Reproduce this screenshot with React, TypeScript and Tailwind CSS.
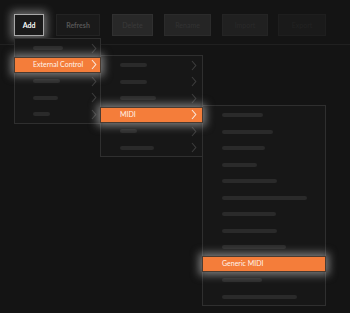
type Row = { label?: string; bar?: number; active?: boolean; chevron?: boolean };

const Chevron = ({ active }: { active?: boolean }) => (
  <svg width="6" height="11" viewBox="0 0 6 11" className="shrink-0">
    <path d="M1 1 L4.8 5.5 L1 10" fill="none" stroke={active ? "#f8e6da" : "#3c3c3c"} strokeWidth="1.1" />
  </svg>
);

const MenuRow = ({ row, indent, chevPad }: { row: Row; indent: string; chevPad: string }) => {
  if (row.active) {
    return (
      <div
        className={`relative z-10 -mx-px h-[16.5px] flex items-center justify-between bg-[#f47d3a] border border-[#4a3b31] shadow-[0_0_9px_3px_rgba(225,225,225,0.5)] ${indent} ${chevPad}`}
      >
        <span className="text-[7px] text-[#fff4ec] leading-none">{row.label}</span>
        {row.chevron && <Chevron active />}
      </div>
    );
  }
  return (
    <div className={`h-[16.5px] flex items-center justify-between ${indent} ${chevPad}`}>
      <div className="h-[4px] rounded-full bg-[#2a2a2a]" style={{ width: row.bar }} />
      {row.chevron && <Chevron />}
    </div>
  );
};

const menu1: Row[] = [
  { bar: 30, chevron: true },
  { label: "External Control", active: true, chevron: true },
  { bar: 27, chevron: true },
  { bar: 25, chevron: true },
  { bar: 17, chevron: true },
];

const menu2: Row[] = [
  { bar: 27, chevron: true },
  { bar: 27, chevron: true },
  { bar: 36, chevron: true },
  { label: "MIDI", active: true, chevron: true },
  { bar: 17, chevron: true },
  { bar: 34, chevron: true },
];

const menu3: Row[] = [
  { bar: 41 },
  { bar: 51 },
  { bar: 43 },
  { bar: 35 },
  { bar: 55 },
  { bar: 85 },
  { bar: 54 },
  { bar: 55 },
  { bar: 64 },
  { label: "Generic MIDI", active: true },
  { bar: 40 },
  { bar: 75 },
];

const ToolButton = ({ label, className }: { label: string; className: string }) => (
  <div className={`h-[22px] flex items-center justify-center text-[7px] ${className}`}>{label}</div>
);

export default function App() {
  return (
    <div className="relative w-[350px] h-[313px] overflow-hidden bg-[#141414] font-['Lato','Open_Sans',sans-serif]">
      <div className="h-[45px] border-b border-[#202020] flex items-start pt-[14px] pl-[14px]">
        <ToolButton
          label="Add"
          className="w-[30px] bg-[#1a1a1a] border border-[#a8a8a8] text-white font-bold shadow-[0_0_9px_3px_rgba(215,215,215,0.45)]"
        />
        <ToolButton label="Refresh" className="ml-[12px] w-[44px] bg-[#1a1a1a] border border-[#232323] text-[#565656] font-bold" />
        <ToolButton label="Delete" className="ml-[12px] w-[41px] bg-[#282828] border border-[#303030] text-[#3a3a3a]" />
        <ToolButton label="Rename" className="ml-[11px] w-[47px] bg-[#252525] border border-[#2b2b2b] text-[#333]" />
        <ToolButton label="Import" className="ml-[11px] w-[46px] bg-[#202020] border border-[#242424] text-[#2a2a2a]" />
        <ToolButton label="Export" className="ml-[10px] w-[48px] bg-[#1a1a1a] border border-[#1e1e1e] text-[#222]" />
      </div>

      <div className="absolute left-[14px] top-[38px] w-[87px] bg-[#171717] border border-[#2f2f2f] pt-px">
        {menu1.map((r, i) => (
          <MenuRow key={i} row={r} indent="pl-[18px]" chevPad="pr-[3px]" />
        ))}
      </div>

      <div className="absolute left-[100px] top-[55px] w-[103px] bg-[#171717] border border-[#2f2f2f] pt-px">
        {menu2.map((r, i) => (
          <MenuRow key={i} row={r} indent="pl-[19px]" chevPad="pr-[5px]" />
        ))}
      </div>

      <div className="absolute left-[202px] top-[105px] w-[124px] bg-[#171717] border border-[#2f2f2f] pt-px">
        {menu3.map((r, i) => (
          <MenuRow key={i} row={r} indent="pl-[19px]" chevPad="pr-[5px]" />
        ))}
      </div>
    </div>
  );
}
